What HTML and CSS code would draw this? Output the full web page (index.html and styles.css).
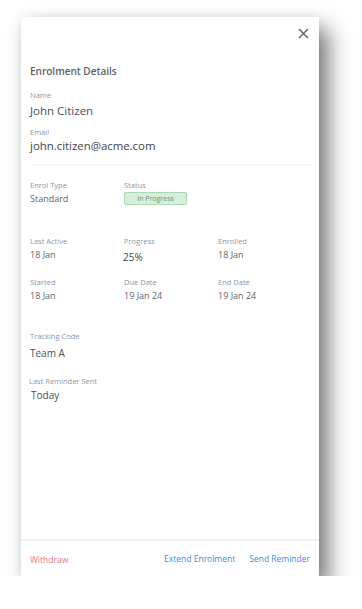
FILE: index.html
```html
<!DOCTYPE html>
<html lang="en">
<head>
  <meta charset="UTF-8">
  <meta name="viewport" content="width=device-width, initial-scale=1.0">
  <title>Enrolment Details</title>
  <link rel="stylesheet" href="styles.css">
</head>
<body>
  <div class="panel">
    <div class="panel-head">
      <button class="close" aria-label="Close">
        <svg width="11" height="11" viewBox="0 0 11 11"><path d="M1 1 L10 10 M10 1 L1 10" stroke="#5f6670" stroke-width="1.5" fill="none"/></svg>
      </button>
    </div>

    <div class="panel-body">
      <h2 class="title">Enrolment Details</h2>

      <div class="field">
        <div class="label">Name</div>
        <div class="value big">John Citizen</div>
      </div>
      <div class="field">
        <div class="label">Email</div>
        <div class="value email">john.citizen@acme.com</div>
      </div>

      <hr class="divider">

      <div class="grid">
        <div class="cell">
          <div class="label">Enrol Type</div>
          <div class="value">Standard</div>
        </div>
        <div class="cell">
          <div class="label">Status</div>
          <span class="badge">In Progress</span>
        </div>
      </div>

      <div class="grid grid-3">
        <div class="cell">
          <div class="label">Last Active</div>
          <div class="value">18 Jan</div>
        </div>
        <div class="cell">
          <div class="label">Progress</div>
          <div class="value pct">25%</div>
        </div>
        <div class="cell">
          <div class="label">Enrolled</div>
          <div class="value">18 Jan</div>
        </div>
        <div class="cell">
          <div class="label">Started</div>
          <div class="value">18 Jan</div>
        </div>
        <div class="cell">
          <div class="label">Due Date</div>
          <div class="value">19 Jan 24</div>
        </div>
        <div class="cell">
          <div class="label">End Date</div>
          <div class="value">19 Jan 24</div>
        </div>
      </div>

      <div class="field tracking">
        <div class="label">Tracking Code</div>
        <div class="value mid">Team A</div>
      </div>
      <div class="field reminder">
        <div class="label">Last Reminder Sent</div>
        <div class="value mid">Today</div>
      </div>
    </div>

    <div class="panel-foot">
      <a href="#" class="link danger">Withdraw</a>
      <div class="actions">
        <a href="#" class="link">Extend Enrolment</a>
        <a href="#" class="link">Send Reminder</a>
      </div>
    </div>
  </div>
</body>
</html>
```

FILE: styles.css
```css
body {
  margin: 0;
  background-color: #ffffff;
  font-family: "Open Sans", "Noto Sans", sans-serif;
  color: #4a4f57;
}

.panel {
  width: 298px;
  height: 559px;
  margin: 17px 0 0 21px;
  background-color: #ffffff;
  box-shadow: 10px 12px 20px rgba(0, 0, 0, 0.5), 0 0 10px rgba(0, 0, 0, 0.08);
  display: flex;
  flex-direction: column;
}

.panel-head {
  display: flex;
  justify-content: flex-end;
  padding: 10px 9px 0 0;
}
.close {
  background: none;
  border: none;
  padding: 0;
  width: 13px;
  height: 13px;
  cursor: pointer;
}

.panel-body {
  flex: 1;
  padding: 0 8px 0 9px;
}

.title {
  font-size: 10px;
  font-weight: 600;
  color: #5a5f66;
  margin: 24px 0 12px;
}

.label {
  font-size: 7.5px;
  color: #8c96a6;
  line-height: 10px;
}
.value {
  font-size: 9px;
  color: #5f646b;
  line-height: 12px;
  margin-top: 3px;
}
.value.big {
  font-size: 11.5px;
  color: #4a4f57;
  line-height: 16px;
}
.value.email {
  font-size: 11.4px;
  color: #40454d;
  line-height: 16px;
  margin-top: 1px;
}
.value.mid {
  font-size: 10px;
  color: #4a4f57;
  line-height: 14px;
  margin-top: 5px;
}
.value.pct {
  font-size: 10px;
  color: #444;
  margin-top: 5px;
  margin-left: -1px;
}

.field {
  margin-bottom: 8px;
}

.divider {
  border: none;
  border-top: 1px solid #f1f2f4;
  margin: 10px 0 15px 1px;
}

.grid {
  display: grid;
  grid-template-columns: 94px 94px 94px;
  row-gap: 14px;
}
.grid-3 {
  margin-top: 31px;
}

.badge {
  display: block;
  box-sizing: border-box;
  margin-top: 2px;
  width: 63px;
  height: 13px;
  line-height: 11px;
  text-align: center;
  font-size: 7px;
  color: #5f9a6a;
  background-color: #d6eeda;
  border: 1px solid #acd9b5;
  border-radius: 2px;
}

.tracking {
  margin-top: 29px;
  margin-bottom: 16px;
}
.reminder .label {
  margin-left: -1px;
}
.reminder .value {
  margin-left: 1px;
  margin-top: 2px;
}

.panel-foot {
  border-top: 2px solid #eef0f2;
  height: 35px;
  display: flex;
  align-items: center;
  justify-content: space-between;
  padding: 0 9px;
}
.actions {
  display: flex;
  gap: 14px;
}
.link {
  font-size: 8.5px;
  color: #3a8fd3;
  text-decoration: none;
}
.link.danger {
  color: #e07b7b;
  margin-top: 2px;
}
```
